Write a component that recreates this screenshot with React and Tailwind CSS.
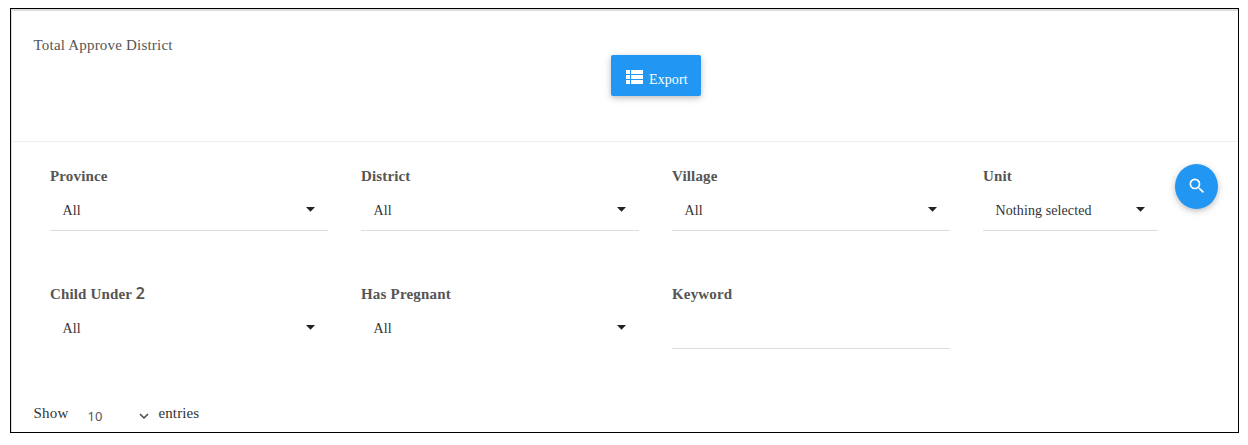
import React from 'react';
import { MdSearch } from 'react-icons/md';

const SelectField = ({ label, labelClass = 'tracking-[0.15px]', value, underline = true, className = 'w-[278px]' }) => (
  <div className={className}>
    <label className={`block h-5 text-[15px] leading-5 font-bold text-[#555] whitespace-nowrap ${labelClass}`}>
      {label}
    </label>
    <div
      className={`mt-[11px] flex h-[34px] items-start justify-between border-b pt-1 pr-[13px] pl-[12.5px] ${
        underline ? 'border-[#ddd]' : 'border-transparent'
      }`}
    >
      <span className="text-[14px] leading-5 tracking-[0.1px] text-[#333] whitespace-nowrap">{value}</span>
      <svg className="mt-[6px] h-[5px] w-[9px]" viewBox="0 0 9 5" fill="#222">
        <path d="M0 0h9L4.5 4.8z" />
      </svg>
    </div>
  </div>
);

const App = () => {
  return (
    <div className="h-[445px] bg-white px-[10px] pt-2 font-['Liberation_Serif',serif]">
      <div className="h-[425px] w-[1229px] border border-black">
        <div className="h-full border-t-2 border-l border-t-[#ddd] border-l-[#ddd]">
          <header className="flex h-[131px] items-start border-b border-[#eee] pl-[21.5px]">
            <h2 className="mt-6 w-[577px] text-[15px] leading-5 tracking-[0.2px] text-[#555]">Total Approve District</h2>
            <button className="mt-[44px] flex h-[41px] w-[90px] items-start rounded-[2px] bg-[#2196f3] pl-[11.5px] text-white shadow-[0_2px_5px_rgba(0,0,0,0.16),0_2px_10px_rgba(0,0,0,0.12)]">
              <svg className="mt-[10px] h-6 w-6 shrink-0" viewBox="0 0 24 24" fill="currentColor">
                <path d="M4 14h4v-4H4v4zm0 5h4v-4H4v4zM4 9h4V5H4v4zm5 5h12v-4H9v4zm0 5h12v-4H9v4zM9 5v4h12V5H9z" />
              </svg>
              <span className="mt-[15px] ml-[3px] text-[14px] leading-5 tracking-[0.1px]">Export</span>
            </button>
          </header>

          <div className="flex pt-[24px] pl-[38px]">
            <div className="-mb-px flex gap-[33px]">
              <SelectField label="Province" value="All" />
              <SelectField label="District" value="All" />
              <SelectField label="Village" value="All" />
              <SelectField label="Unit" value="Nothing selected" className="w-[175px]" />
            </div>
            <button className="-mt-[2px] ml-[17px] flex h-[45px] w-[43px] items-center justify-center rounded-[50%] bg-[#2196f3] text-white shadow-[0_2px_5px_rgba(0,0,0,0.16),0_2px_10px_rgba(0,0,0,0.12)]">
              <MdSearch className="mb-px h-5 w-5" />
            </button>
          </div>

          <div className="flex gap-[33px] pt-[54px] pl-[38px]">
            <SelectField
              label={<>Child Under <span className="font-['Noto_Sans',sans-serif] text-[16px] leading-none font-semibold">2</span></>}
              value="All"
              underline={false}
            />
            <SelectField label="Has Pregnant" labelClass="tracking-[0.2px]" value="All" underline={false} />
            <div className="w-[278px]">
              <label className="block h-5 text-[15px] leading-5 font-bold tracking-[0.15px] text-[#555]">Keyword</label>
              <input className="mt-[11px] block h-[34px] w-full border-b border-[#ddd] outline-none" />
            </div>
          </div>

          <div className="flex pt-[54px] pl-[21.5px] text-[15px] leading-5 text-[#333]">
            <span className="w-[54px] tracking-[0.2px]">Show</span>
            <span className="mt-[3px] w-[51px] font-['Noto_Sans',sans-serif] text-[13px] leading-5 text-[#555]">10</span>
            <svg className="mt-[9px] h-[8px] w-[10px]" viewBox="0 0 10 8" fill="none" stroke="#444" strokeWidth="1.5">
              <path d="M1 2l4 4 4-4" />
            </svg>
            <span className="ml-2.5 tracking-[0.1px]">entries</span>
          </div>
        </div>
      </div>
    </div>
  );
};

export default App;
